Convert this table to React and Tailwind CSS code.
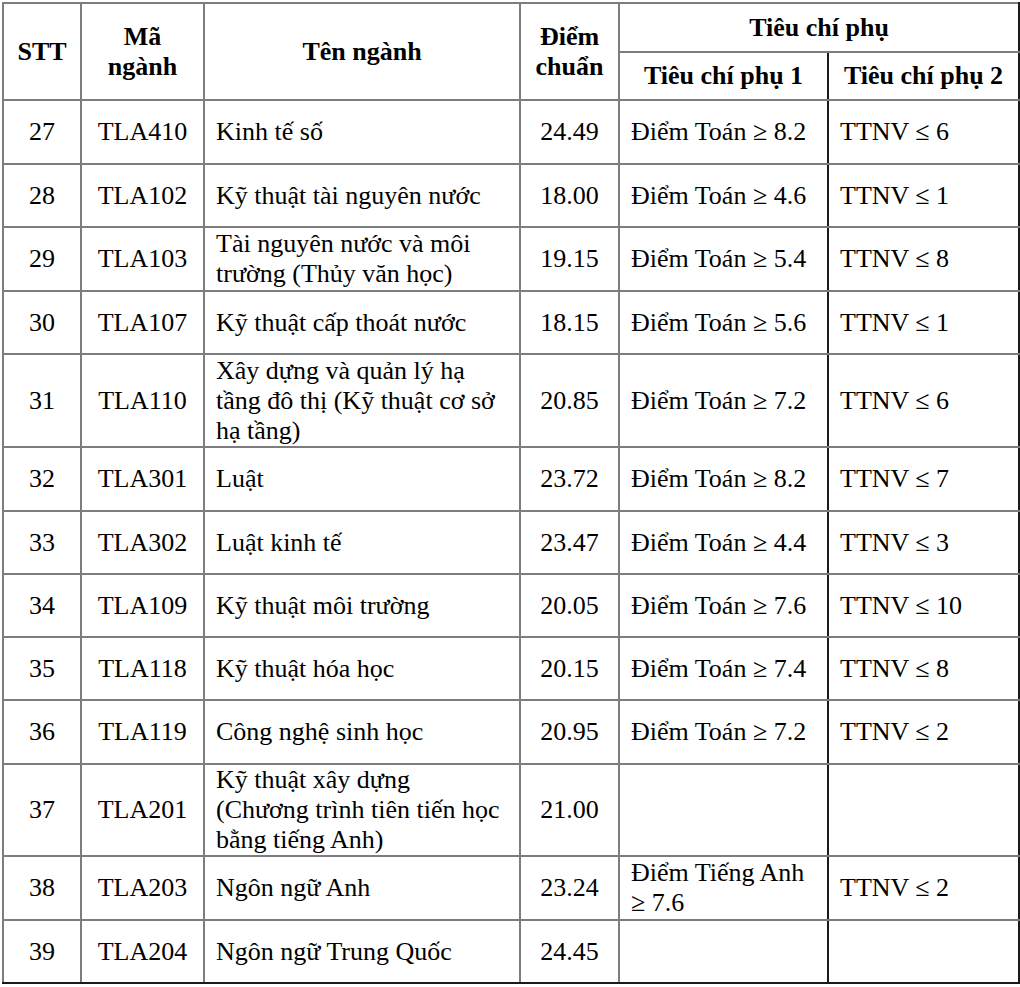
import React from "react";

const rows = [
  ["27", "TLA410", ["Kinh tế số"], "24.49", ["Điểm Toán ≥ 8.2"], "TTNV ≤ 6", 64],
  ["28", "TLA102", ["Kỹ thuật tài nguyên nước"], "18.00", ["Điểm Toán ≥ 4.6"], "TTNV ≤ 1", 63],
  ["29", "TLA103", ["Tài nguyên nước và môi", "trường (Thủy văn học)"], "19.15", ["Điểm Toán ≥ 5.4"], "TTNV ≤ 8", 64],
  ["30", "TLA107", ["Kỹ thuật cấp thoát nước"], "18.15", ["Điểm Toán ≥ 5.6"], "TTNV ≤ 1", 63],
  ["31", "TLA110", ["Xây dựng và quản lý hạ", "tầng đô thị (Kỹ thuật cơ sở", "hạ tầng)"], "20.85", ["Điểm Toán ≥ 7.2"], "TTNV ≤ 6", 93],
  ["32", "TLA301", ["Luật"], "23.72", ["Điểm Toán ≥ 8.2"], "TTNV ≤ 7", 64],
  ["33", "TLA302", ["Luật kinh tế"], "23.47", ["Điểm Toán ≥ 4.4"], "TTNV ≤ 3", 63],
  ["34", "TLA109", ["Kỹ thuật môi trường"], "20.05", ["Điểm Toán ≥ 7.6"], "TTNV ≤ 10", 63],
  ["35", "TLA118", ["Kỹ thuật hóa học"], "20.15", ["Điểm Toán ≥ 7.4"], "TTNV ≤ 8", 63],
  ["36", "TLA119", ["Công nghệ sinh học"], "20.95", ["Điểm Toán ≥ 7.2"], "TTNV ≤ 2", 64],
  ["37", "TLA201", ["Kỹ thuật xây dựng", "(Chương trình tiên tiến học", "bằng tiếng Anh)"], "21.00", [], "", 91],
  ["38", "TLA203", ["Ngôn ngữ Anh"], "23.24", ["Điểm Tiếng Anh", "≥ 7.6"], "TTNV ≤ 2", 64],
  ["39", "TLA204", ["Ngôn ngữ Trung Quốc"], "24.45", [], "", 63],
];

function Lines({ lines }) {
  return lines.map((l, i) => (
    <React.Fragment key={i}>
      {i > 0 && <br />}
      {l}
    </React.Fragment>
  ));
}

export default function App() {
  const cell = "border-2 border-[#7d7d7d] align-middle p-0";
  const dark = "border-r-2 border-r-[#1a1a1a]";
  return (
    <div className="w-[1020px] h-[987px] bg-white pt-[2px] pl-[2px]">
      <table
        className="table-fixed border-collapse w-[1016px] text-black text-[26px] leading-[30px]"
        style={{ fontFamily: '"Liberation Serif", "Times New Roman", serif' }}
      >
        <colgroup>
          <col className="w-[78px]" />
          <col className="w-[123px]" />
          <col className="w-[316px]" />
          <col className="w-[99px]" />
          <col className="w-[209px]" />
          <col className="w-[191px]" />
        </colgroup>
        <thead className="font-bold">
          <tr className="h-[49px]">
            <th rowSpan={2} className={`${cell} text-center`}>STT</th>
            <th rowSpan={2} className={`${cell} text-center`}>Mã<br />ngành</th>
            <th rowSpan={2} className={`${cell} text-center`}>Tên ngành</th>
            <th rowSpan={2} className={`${cell} text-center`}>Điểm<br />chuẩn</th>
            <th colSpan={2} className={`${cell} ${dark} text-center`}>Tiêu chí phụ</th>
          </tr>
          <tr className="h-[48px]">
            <th className={`${cell} border-r-[#1a1a1a] text-center whitespace-nowrap`}>Tiêu chí phụ 1</th>
            <th className={`${cell} ${dark} text-center whitespace-nowrap`}>Tiêu chí phụ 2</th>
          </tr>
        </thead>
        <tbody>
          {rows.map((r, idx) => {
            const last = idx === rows.length - 1;
            const b = last ? "border-b-[#1a1a1a]" : "";
            return (
              <tr key={r[0]} style={{ height: r[6] }}>
                <td className={`${cell} ${b} text-center`}>{r[0]}</td>
                <td className={`${cell} ${b} text-center`}>{r[1]}</td>
                <td className={`${cell} ${b} pl-[11px] whitespace-nowrap`}>
                  <Lines lines={r[2]} />
                </td>
                <td className={`${cell} ${b} text-center`}>{r[3]}</td>
                <td className={`${cell} ${b} border-r-[#1a1a1a] pl-[11px] whitespace-nowrap`}>
                  <Lines lines={r[4]} />
                </td>
                <td className={`${cell} ${b} ${dark} pl-[11px] whitespace-nowrap`}>{r[5]}</td>
              </tr>
            );
          })}
        </tbody>
      </table>
    </div>
  );
}
